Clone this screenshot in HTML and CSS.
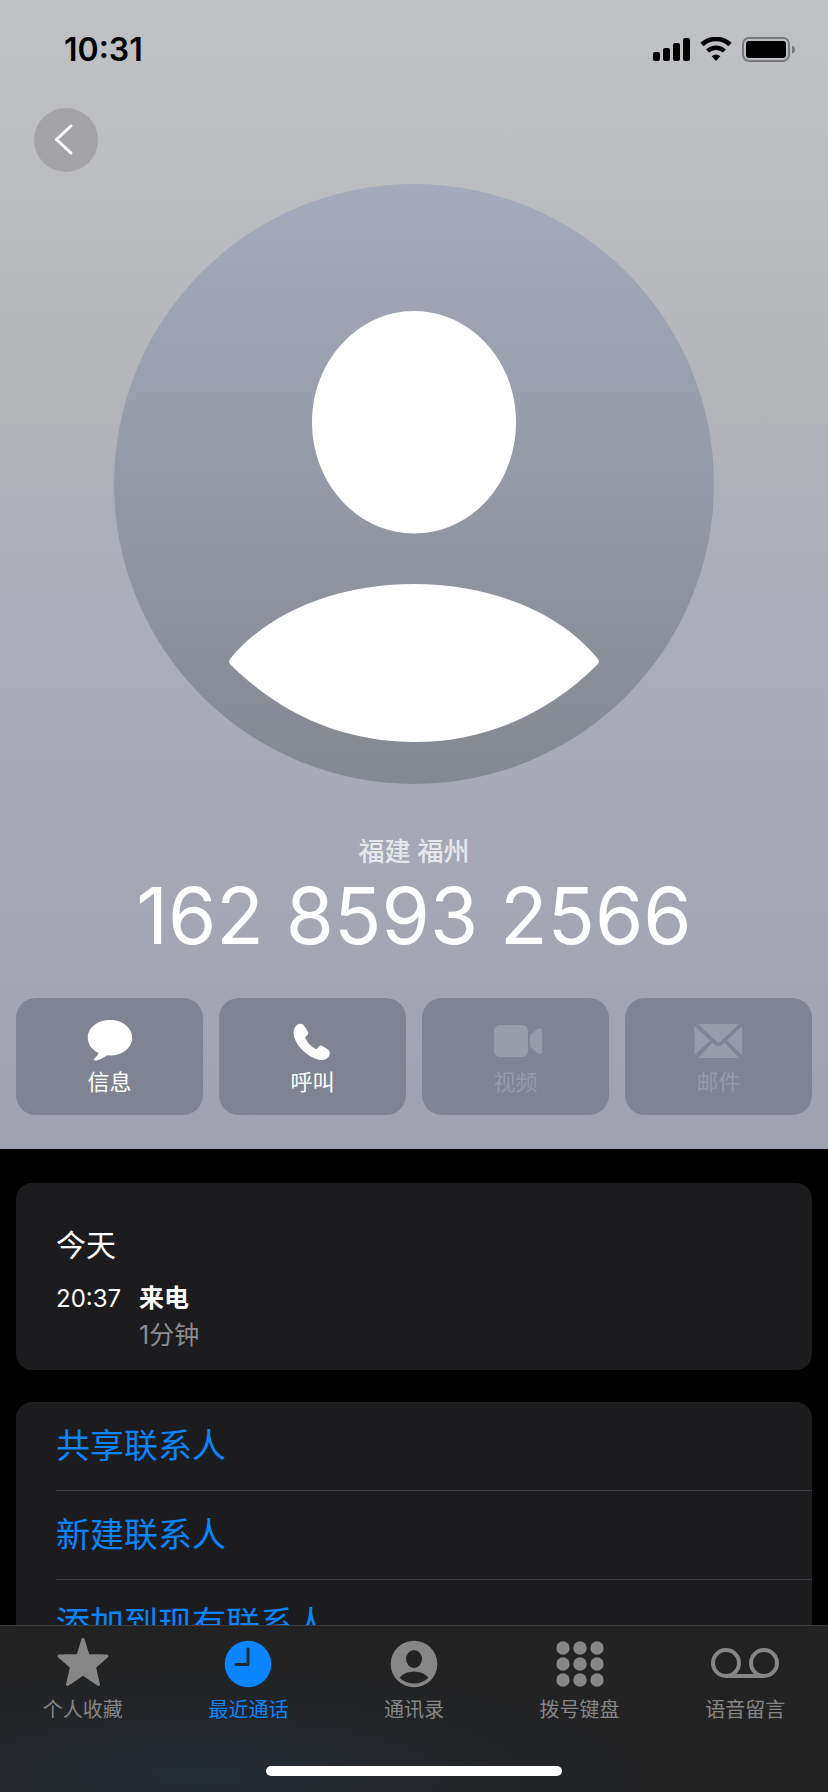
FILE: index.html
```
<!DOCTYPE html>
<html lang="zh-CN">
<head>
  <meta charset="UTF-8">
  <meta name="viewport" content="width=device-width, initial-scale=1">
  <title>162 8593 2566</title>
  <link rel="stylesheet" href="styles.css">
</head>
<body>
  <main class="content">
    <header class="hero">
      <div class="status-bar">
        <time class="status-time">10:31</time>
        <div class="status-icons">
          <svg width="37" height="26" viewBox="0 0 37 26">
            <rect x="0" y="15" width="7" height="9" rx="2"/>
            <rect x="10" y="11" width="7" height="13" rx="2"/>
            <rect x="20" y="6" width="7" height="18" rx="2"/>
            <rect x="30" y="1" width="7" height="23" rx="2"/>
          </svg>
          <svg width="32" height="26" viewBox="0 0 32 26">
            <path d="M2 7.5A20.5 20.5 0 0 1 30 7.5" fill="none" stroke="#000" stroke-width="4.6"/>
            <path d="M7.6 14A12.4 12.4 0 0 1 24.4 14" fill="none" stroke="#000" stroke-width="4.4"/>
            <path d="M11.6 19.2Q16 15.6 20.4 19.2L16 24Z"/>
          </svg>
          <svg width="54" height="26" viewBox="0 0 54 26">
            <rect x="1" y="1" width="46" height="23" rx="6" fill="none" stroke="#77787b" stroke-width="2"/>
            <rect x="4" y="4" width="40" height="17" rx="3"/>
            <path d="M50 8.5Q53 9.5 53 12.5T50 16.5Z" fill="#77787b"/>
          </svg>
        </div>
      </div>

      <button class="back-btn" aria-label="返回">
        <svg width="64" height="64" viewBox="0 0 64 64"><path d="M37 18L22.5 31.5L37 45" fill="none" stroke="#fff" stroke-width="3" stroke-linecap="round" stroke-linejoin="round"/></svg>
      </button>

      <svg class="avatar" viewBox="0 0 600 600">
        <defs>
          <linearGradient id="avatarBg" x1="0" y1="0" x2="0" y2="1">
            <stop offset="0" stop-color="#a5abba"/>
            <stop offset="1" stop-color="#848891"/>
          </linearGradient>
        </defs>
        <circle cx="300" cy="300" r="300" fill="url(#avatarBg)"/>
        <path d="M300 127C356 127 402 176 402 238S357 349.500 300 349.500S198 299 198 238S244 127 300 127Z" fill="#fff"/>
        <path d="M116 475C157 425 228 400 300 400S443 425 484 475Q485.500 478 484 480C433 531 370 558 300 558S167 531 116 480Q114.500 478 116 475Z" fill="#fff"/>
      </svg>

      <p class="location">福建 福州</p>
      <h1 class="number">162 8593 2566</h1>

      <div class="actions">
        <button class="action-btn">
          <svg width="52" height="42" viewBox="0 0 52 42"><path d="M26 1C38.500 1 48.200 8.800 48.200 18.700S38.500 36.500 26 36.500L23 36.300C19 39 14.500 41.500 11.500 41.700C9.500 41.600 9.700 40.300 10.700 39.300C12.500 37.500 14 36 14.700 34C7.500 30.500 3.800 25 3.800 18.700C3.800 8.800 13.500 1 26 1Z"/></svg>
          <span>信息</span>
        </button>
        <button class="action-btn">
          <svg width="52" height="42" viewBox="0 0 52 42"><path d="M8.500 7.500C11 4.500 14.500 3.800 17 6.800C18.800 9 20.300 11.300 21.200 13.500C22 16 18 17 18.300 19C20 23.500 24 27.500 28.500 30C30.500 30.500 31.500 26.500 34 26.500C37 27.500 40 29.500 42 31.500C43.500 33.500 43 37 40.500 39C37.500 41.500 33 41.500 29 40C19 36 10 27.500 7.200 18C6 13.500 6.500 10 8.500 7.500Z"/></svg>
          <span>呼叫</span>
        </button>
        <button class="action-btn" disabled>
          <svg width="52" height="42" viewBox="0 0 52 42"><rect x="4" y="6" width="34" height="32" rx="6"/><path d="M40 17.500Q40 16.500 41 15.500L47.500 10Q52 7.500 52 11V33Q52 36.500 47.500 34L41 28.500Q40 27.500 40 26.500Z"/></svg>
          <span>视频</span>
        </button>
        <button class="action-btn" disabled>
          <svg width="52" height="42" viewBox="0 0 52 42"><path d="M5 5H46L28 22Q25.500 24.500 23 22ZM1.500 7L17 21.500L1.500 36ZM49 7L34 21.500L49 36ZM5 39L19.300 23.500L21.500 25.500Q25.500 28.500 29.500 25.500L31.700 23.500L46 39Z"/></svg>
          <span>邮件</span>
        </button>
      </div>
    </header>

    <section class="card call-log">
      <h2>今天</h2>
      <div class="call">
        <time>20:37</time>
        <div class="call-info">
          <p class="call-type">来电</p>
          <p class="call-length">1分钟</p>
        </div>
      </div>
    </section>

    <ul class="card options">
      <li><button>共享联系人</button></li>
      <li><button>新建联系人</button></li>
      <li><button>添加到现有联系人</button></li>
    </ul>
  </main>

  <footer class="tab-bar">
    <nav class="tabs">
      <a href="#favorites">
        <svg width="72" height="52" viewBox="0 0 72 52"><path d="M36 2.500L41 18.500L60 19L47.500 30L51.500 47.500L36 37L20.500 47.500L24.500 30L12 19L31 18.500Z" stroke="currentColor" stroke-width="3" stroke-linejoin="round"/></svg>
        <span>个人收藏</span>
      </a>
      <a href="#recents" class="active">
        <svg width="72" height="52" viewBox="0 0 72 52"><circle cx="36" cy="27" r="23.300"/><path d="M36 12V27.500H24" fill="none" stroke="#22272b" stroke-width="3" stroke-linecap="round" stroke-linejoin="round"/></svg>
        <span>最近通话</span>
      </a>
      <a href="#contacts">
        <svg width="72" height="52" viewBox="0 0 72 52"><circle cx="36" cy="27" r="23.300"/><ellipse cx="36" cy="22" rx="8" ry="9" fill="#222324"/><path d="M21.500 40.500C25 36.500 30 34.500 36 34.500S47 36.500 50.500 40.500C46.500 44.500 41.500 46.500 36 46.500S25.500 44.500 21.500 40.500Z" fill="#222324"/></svg>
        <span>通讯录</span>
      </a>
      <a href="#keypad">
        <svg width="72" height="52" viewBox="0 0 72 52">
          <circle cx="19" cy="11" r="6.700"/><circle cx="36" cy="11" r="6.700"/><circle cx="53" cy="11" r="6.700"/>
          <circle cx="19" cy="27" r="6.700"/><circle cx="36" cy="27" r="6.700"/><circle cx="53" cy="27" r="6.700"/>
          <circle cx="19" cy="43" r="6.700"/><circle cx="36" cy="43" r="6.700"/><circle cx="53" cy="43" r="6.700"/>
        </svg>
        <span>拨号键盘</span>
      </a>
      <a href="#voicemail">
        <svg width="72" height="52" viewBox="0 0 72 52"><g fill="none" stroke="currentColor" stroke-width="4"><circle cx="17" cy="26" r="13"/><circle cx="55" cy="26" r="13"/><path d="M17 39H55"/></g></svg>
        <span>语音留言</span>
      </a>
    </nav>
    <div class="home-indicator"></div>
  </footer>
</body>
</html>
```
FILE: styles.css
```
* { box-sizing: border-box; }
body { margin: 0; height: 100vh; display: flex; flex-direction: column; background: #000; color: #fff; font-family: Inter, "Noto Sans CJK SC", sans-serif;}
h1, h2, p, ul { margin: 0; padding: 0;}
button { border: none; background: none; padding: 0; color: inherit; font-family: inherit; cursor: pointer;}
svg { display: block;}
.content { flex: 1; min-height: 0; overflow-y: auto; scrollbar-width: none;}

.hero { display: flex; flex-direction: column; padding: 30px 16px 34px; background: linear-gradient(#c0c1c5 0%, #bcbdc1 17%, #b3b4b8 36%, #adb0b9 45%, #a8aab6 65%, #a0a3af 100%);}
.status-bar { display: flex; justify-content: space-between; align-items: center; padding: 0 16px 0 48px; color: #000;}
.status-time { font-size: 32px; line-height: 40px; font-weight: 600;}
.status-icons { display: flex; gap: 10px;}
.back-btn { width: 64px; height: 64px; margin: 38px 0 12px 18px; border-radius: 50%; background: #a3a3a8;}
.avatar { width: 600px; max-width: 100%; align-self: center;}
.location { margin-top: 50px; text-align: center; font-size: 26px; line-height: 36px; font-weight: 500; color: #e6e7ea;}
.number { text-align: center; font-size: 78px; line-height: 92px; font-weight: 400; white-space: nowrap;}
.actions { display: grid; grid-template-columns: repeat(4, 1fr); gap: 16px; margin-top: 36px;}
.action-btn { display: flex; flex-direction: column; align-items: center; gap: 6px; padding: 21px 0 18px; border-radius: 20px; background: #808392; font-size: 22px; line-height: 30px; font-weight: 400;}
.action-btn svg { fill: currentColor;}
.action-btn:disabled { color: #989ba8; cursor: default;}

.card { background: #1c1c1e; border-radius: 16px;}
.call-log { margin: 34px 16px 32px; padding: 42px 40px 16px;}
.call-log h2 { font-size: 30px; line-height: 40px; font-weight: 400;}
.call { display: flex; gap: 18px; margin-top: 15px; font-size: 24px; line-height: 37px;}
.call-info { font-size: 25px;}
.call-type { font-weight: 700;}
.call-length { color: #8d8d93;}

.options { margin: 0 16px 32px; padding-left: 40px; list-style: none;}
.options li + li { border-top: 1px solid #3d3d41;}
.options button { width: 100%; height: 88px; text-align: left; font-size: 34px; line-height: 48px; font-weight: 400; color: #0a84ff;}

.tab-bar { padding-bottom: 16px; border-top: 1px solid #3d3d41; background: radial-gradient(ellipse at 24% 90%, #242c35 0%, #222427 32%, #222 60%) #222;}
.tabs { display: grid; grid-template-columns: repeat(5, 1fr); padding: 11px 0 42px;}
.tabs a { display: flex; flex-direction: column; align-items: center; gap: 7px; color: #868686; text-decoration: none; font-size: 20px; line-height: 28px;}
.tabs a.active { color: #0a84ff;}
.tabs svg { fill: currentColor;}
.home-indicator { width: 296px; height: 10px; margin: 0 auto; border-radius: 5px; background: #fff;}
```
